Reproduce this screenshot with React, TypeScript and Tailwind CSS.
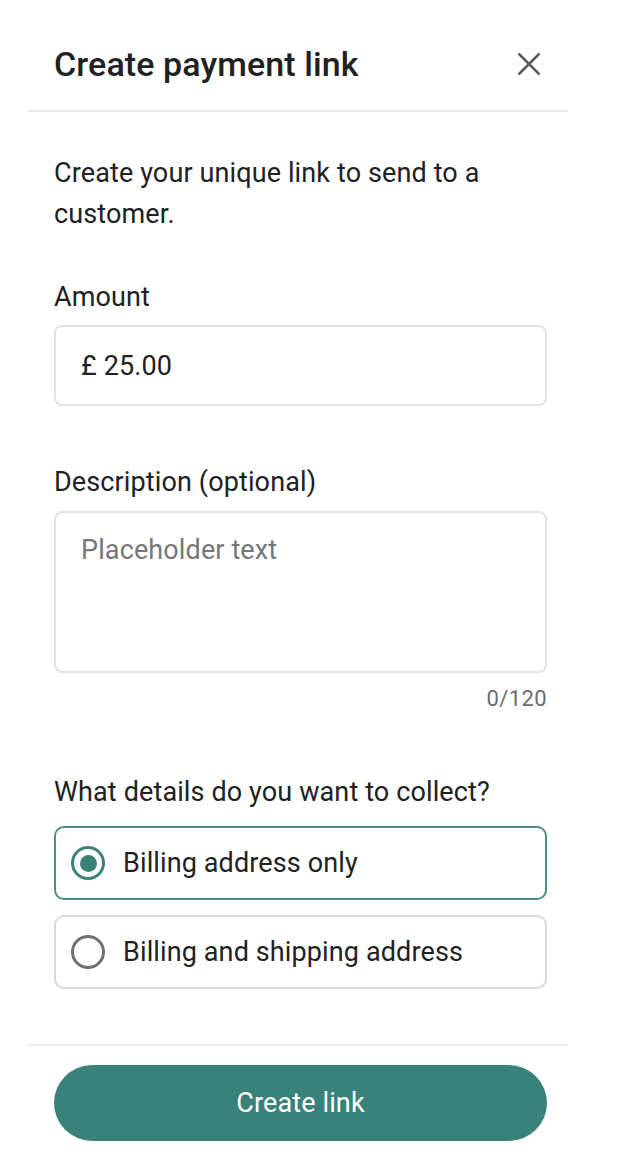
import { useState } from "react";

const font = { fontFamily: "Roboto, 'Noto Sans', sans-serif" };

const options = ["Billing address only", "Billing and shipping address"];

export default function App() {
  const [choice, setChoice] = useState(0);
  return (
    <main className="min-h-screen w-full bg-white text-[#212121]" style={font}>
      <div className="ml-[28px] w-[540px]">
        {/* header */}
        <header className="flex items-start justify-between pb-[26px] pl-[26px] pr-[27px] pt-[44px]">
          <h1 className="text-[34px] font-medium leading-[40px] tracking-[0.1px]">Create payment link</h1>
          <button aria-label="Close" className="mt-[8px] h-[24px] w-[24px] text-[#5f5f5f]">
            <svg width="24" height="24" viewBox="0 0 24 24" fill="none" stroke="currentColor" strokeWidth="2.6">
              <path d="M1.5 1.5l21 21M22.5 1.5l-21 21" />
            </svg>
          </button>
        </header>
        <div className="h-[2px] bg-[#ebebeb]" />

        <div className="pl-[26px] pr-[21px] pt-[41px] text-[27px] tracking-[0.12px]">
          <p className="leading-[41px]">Create your unique link to send to a customer.</p>

          <label className="mt-[42px] block leading-[40px]">Amount</label>
          <div className="mt-[8px] flex h-[81px] items-center rounded-[8px] border-2 border-[#e2e2e2] px-[25px] leading-[40px]">
            £ 25.00
          </div>

          <label className="mt-[56px] block leading-[40px]">Description (optional)</label>
          <div className="mt-[9px] h-[162px] rounded-[8px] border-2 border-[#e2e2e2] px-[25px] pt-[17px] leading-[40px] text-[#777]">
            Placeholder text
          </div>
          <div className="mt-[11px] text-right text-[22px] leading-[30px] tracking-[0.4px] text-[#6b6b6b]">0/120</div>

          <p className="mt-[58px] leading-[40px]">What details do you want to collect?</p>
          <div className="mt-[14px] flex flex-col gap-[15px]">
            {options.map((o, i) => (
              <button
                key={o}
                onClick={() => setChoice(i)}
                className={
                  choice === i
                    ? "flex h-[74px] items-center gap-[18px] rounded-[10px] border-2 border-[#4a8f86] pl-[15px] text-left leading-[40px]"
                    : "flex h-[74px] items-center gap-[18px] rounded-[10px] border-2 border-[#d9d9d9] pl-[15px] text-left leading-[40px]"
                }
              >
                {choice === i ? (
                  <span className="flex h-[34px] w-[34px] items-center justify-center rounded-full border-[3px] border-[#3b8379]">
                    <span className="h-[17px] w-[17px] rounded-full bg-[#3b8379]" />
                  </span>
                ) : (
                  <span className="h-[34px] w-[34px] rounded-full border-[3px] border-[#707070]" />
                )}
                <span>{o}</span>
              </button>
            ))}
          </div>
        </div>

        <div className="mt-[55px] h-[2px] bg-[#ebebeb]" />
        <div className="pl-[26px] pr-[21px] pt-[19px]">
          <button className="flex h-[76px] w-full items-center justify-center rounded-full bg-[#39827a] text-[27px] leading-[40px] tracking-[0.12px] text-white">
            Create link
          </button>
        </div>
      </div>
    </main>
  );
}
